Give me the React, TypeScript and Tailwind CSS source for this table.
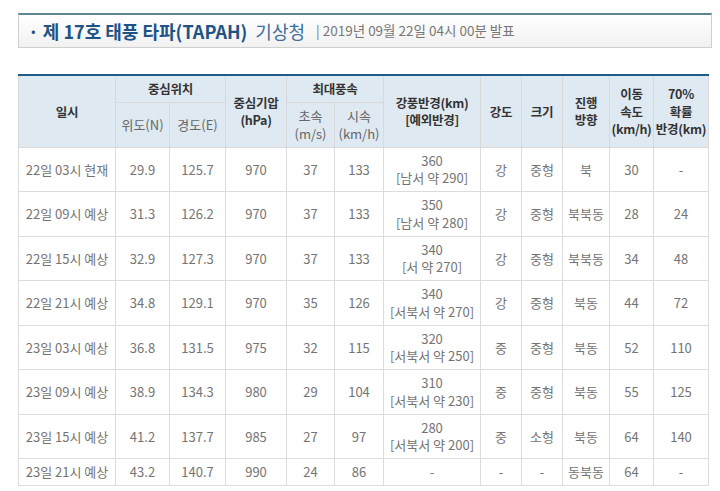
import React from "react";

type Row = {
    time: string;
    lat: string;
    lon: string;
    pressure: string;
    ms: string;
    kmh: string;
    radius: string;
    extra?: string;
    strength: string;
    size: string;
    dir: string;
    speed: string;
    prob: string;
};

const rows: Row[] = [
    { time: "22일 03시 현재", lat: "29.9", lon: "125.7", pressure: "970", ms: "37", kmh: "133", radius: "360", extra: "[남서 약 290]", strength: "강", size: "중형", dir: "북", speed: "30", prob: "-" },
    { time: "22일 09시 예상", lat: "31.3", lon: "126.2", pressure: "970", ms: "37", kmh: "133", radius: "350", extra: "[남서 약 280]", strength: "강", size: "중형", dir: "북북동", speed: "28", prob: "24" },
    { time: "22일 15시 예상", lat: "32.9", lon: "127.3", pressure: "970", ms: "37", kmh: "133", radius: "340", extra: "[서 약 270]", strength: "강", size: "중형", dir: "북북동", speed: "34", prob: "48" },
    { time: "22일 21시 예상", lat: "34.8", lon: "129.1", pressure: "970", ms: "35", kmh: "126", radius: "340", extra: "[서북서 약 270]", strength: "강", size: "중형", dir: "북동", speed: "44", prob: "72" },
    { time: "23일 03시 예상", lat: "36.8", lon: "131.5", pressure: "975", ms: "32", kmh: "115", radius: "320", extra: "[서북서 약 250]", strength: "중", size: "중형", dir: "북동", speed: "52", prob: "110" },
    { time: "23일 09시 예상", lat: "38.9", lon: "134.3", pressure: "980", ms: "29", kmh: "104", radius: "310", extra: "[서북서 약 230]", strength: "중", size: "중형", dir: "북동", speed: "55", prob: "125" },
    { time: "23일 15시 예상", lat: "41.2", lon: "137.7", pressure: "985", ms: "27", kmh: "97", radius: "280", extra: "[서북서 약 200]", strength: "중", size: "소형", dir: "북동", speed: "64", prob: "140" },
    { time: "23일 21시 예상", lat: "43.2", lon: "140.7", pressure: "990", ms: "24", kmh: "86", radius: "-", strength: "-", size: "-", dir: "동북동", speed: "64", prob: "-" },
];

const th = "border border-[#d9d9d9] px-0 py-[4.25px] font-bold text-[12.5px] tracking-[-0.3px] text-[#333] text-center align-middle";
const sub = "border border-[#d9d9d9] px-0 py-[4.25px] font-normal text-[#666] text-center align-middle";
const td = "border border-[#dcdcdc] px-0 py-[4.25px] text-center align-middle";

export default function App() {
    return (
        <div
            className="w-[720px] h-[491px] bg-white overflow-hidden leading-[17.5px] text-[13px] text-[#747474]"
            style={{ fontFamily: '"Noto Sans CJK KR", "Noto Sans", sans-serif' }}
        >
            <div className="ml-[18px] mt-[13px] w-[694px] h-[35px] border border-[#cfcfcf] border-t-2 border-t-[#5d8593] bg-gradient-to-b from-white to-[#f1f1f1] flex items-center pl-[9px] leading-none">
                <span className="text-[18px] font-bold text-[#1d5385]">
                    · 제 17호 태풍 타파(TAPAH)
                </span>
                <span className="text-[18px] text-[#3b6f9c] ml-[8px]">기상청</span>
                <span className="text-[13.5px] text-[#777] ml-[11px]">| 2019년 09월 22일 04시 00분 발표</span>
            </div>

            <table className="ml-[18px] mt-[26px] w-[690px] table-fixed border-collapse border-t-2 border-t-[#1f5c87]">
                <colgroup>
                    <col className="w-[97px]" />
                    <col className="w-[54px]" />
                    <col className="w-[56px]" />
                    <col className="w-[61px]" />
                    <col className="w-[48px]" />
                    <col className="w-[49px]" />
                    <col className="w-[97px]" />
                    <col className="w-[41px]" />
                    <col className="w-[41px]" />
                    <col className="w-[47px]" />
                    <col className="w-[44px]" />
                    <col className="w-[55px]" />
                </colgroup>
                <thead className="bg-[#dfe9f1]">
                    <tr>
                        <th rowSpan={2} className={th}>일시</th>
                        <th colSpan={2} className={th}>중심위치</th>
                        <th rowSpan={2} className={th}>중심기압<br />(hPa)</th>
                        <th colSpan={2} className={th}>최대풍속</th>
                        <th rowSpan={2} className={th}>강풍반경(km)<br />[예외반경]</th>
                        <th rowSpan={2} className={th}>강도</th>
                        <th rowSpan={2} className={th}>크기</th>
                        <th rowSpan={2} className={th}>진행<br />방향</th>
                        <th rowSpan={2} className={th}>이동<br />속도<br />(km/h)</th>
                        <th rowSpan={2} className={th + " whitespace-nowrap"}>70%<br />확률<br />반경(km)</th>
                    </tr>
                    <tr>
                        <th className={sub}>위도(N)</th>
                        <th className={sub}>경도(E)</th>
                        <th className={sub}>초속<br />(m/s)</th>
                        <th className={sub}>시속<br />(km/h)</th>
                    </tr>
                </thead>
                <tbody>
                    {rows.map((r) => (
                        <tr key={r.time}>
                            <td className={td}>{r.time}</td>
                            <td className={td}>{r.lat}</td>
                            <td className={td}>{r.lon}</td>
                            <td className={td}>{r.pressure}</td>
                            <td className={td}>{r.ms}</td>
                            <td className={td}>{r.kmh}</td>
                            <td className={td}>
                                {r.radius}
                                {r.extra && (
                                    <>
                                        <br />
                                        {r.extra}
                                    </>
                                )}
                            </td>
                            <td className={td}>{r.strength}</td>
                            <td className={td}>{r.size}</td>
                            <td className={td}>{r.dir}</td>
                            <td className={td}>{r.speed}</td>
                            <td className={td}>{r.prob}</td>
                        </tr>
                    ))}
                </tbody>
            </table>
        </div>
    );
}
